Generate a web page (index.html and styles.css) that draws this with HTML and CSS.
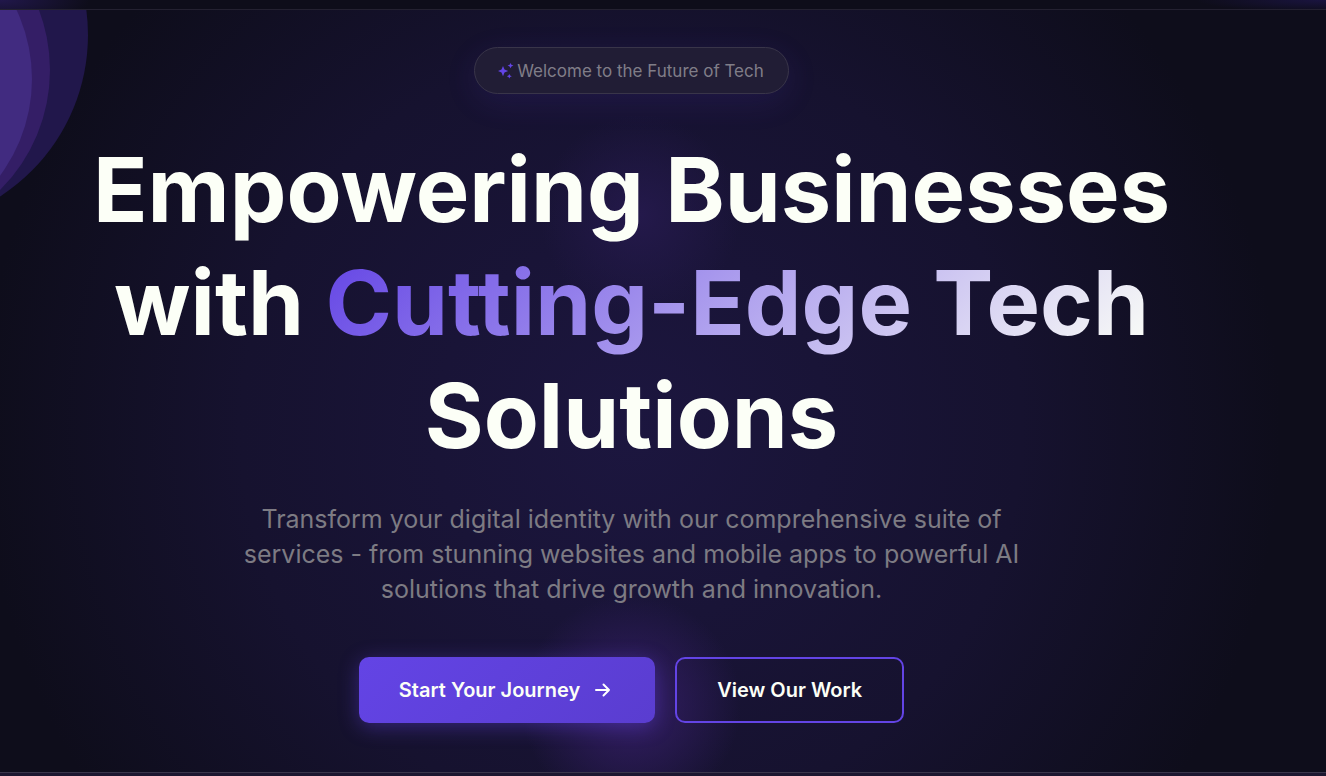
FILE: index.html
```html
<!DOCTYPE html>
<html lang="en">
<head>
    <meta charset="UTF-8">
    <meta name="viewport" content="width=device-width, initial-scale=1.0">
    <title>Cutting-Edge Tech Solutions</title>
    <link rel="stylesheet" href="styles.css">
</head>
<body>
    <header class="top-bar"></header>

    <main class="hero">
        <!-- Overlapping circles in the corner -->
        <svg class="hero-circles" width="100" height="200" viewBox="0 10 100 200" aria-hidden="true">
            <circle cx="-104" cy="35" r="192" fill="#21174b"/>
            <circle cx="-119" cy="70" r="169" fill="#341e66"/>
            <circle cx="-130" cy="79" r="162" fill="#412b80"/>
        </svg>

        <div class="hero-content">
            <div class="hero-badge">
                <svg width="16" height="16" viewBox="0 0 16 16" fill="#6344e5" aria-hidden="true">
                    <path d="M5 3 6.5 6.5 10.2 8 6.5 9.5 5 13.2 3.5 9.5 0 8 3.5 6.5Z"/>
                    <path d="M12.5 0 13.4 1.8 15.4 2.6 13.4 3.4 12.5 5.2 11.6 3.4 9.6 2.6 11.6 1.8Z"/>
                    <path d="M11.3 11 12.1 12.6 13.8 13.3 12.1 14 11.3 15.6 10.5 14 8.8 13.3 10.5 12.6Z"/>
                </svg>
                <span>Welcome to the Future of Tech</span>
            </div>

            <h1>Empowering Businesses with <span class="gradient-text">Cutting-Edge Tech</span> Solutions</h1>

            <p>Transform your digital identity with our comprehensive suite of services - from stunning websites and mobile apps to powerful AI solutions that drive growth and innovation.</p>

            <div class="hero-buttons">
                <button type="button" class="btn btn-primary">
                    Start Your Journey
                    <svg width="16" height="16" viewBox="0 0 16 16" fill="none" stroke="#fff" stroke-width="2" stroke-linecap="round" stroke-linejoin="round" aria-hidden="true">
                        <path d="M1 8H14M8.5 2.5 14 8 8.5 13.5"/>
                    </svg>
                </button>
                <button type="button" class="btn btn-outline">View Our Work</button>
            </div>
        </div>
    </main>

    <footer class="bottom-bar"></footer>
</body>
</html>
```

FILE: styles.css
```css
* {
    box-sizing: border-box;
}
body {
    margin: 0;
    min-height: 100vh;
    display: flex;
    flex-direction: column;
    background-color: #0e0d1a;
    color: #fcfff7;
    font-family: Inter, sans-serif;
}
.top-bar {
    height: 10px;
    border-bottom: 1px solid #242131;
    background:
        radial-gradient(ellipse 90px 24px at 0 0, #21174b, transparent),
        radial-gradient(ellipse 130px 12px at 100% 0, #1a1440, transparent),
        #0e0d1a;
}
.hero {
    position: relative;
    flex: 1;
    padding: 37px 63px 48px 0;
    background:
        radial-gradient(circle 110px at 631px 695px, #341e66, transparent),
        radial-gradient(circle 100px at 640px 205px, #24194b, transparent),
        radial-gradient(circle 650px at 631px 420px, #1c163f, #16122f 60%, #0e0d1b);
}
.hero-circles {
    position: absolute;
    top: 0;
    left: 0;
}
.hero-content {
    display: flex;
    flex-direction: column;
    align-items: center;
    text-align: center;
}
.hero-badge {
    display: flex;
    align-items: center;
    gap: 3px;
    height: 47px;
    padding: 0 24px 0 23px;
    border: 1px solid #393549;
    border-radius: 24px;
    background-color: #211d35;
    box-shadow: 0 8px 32px rgba(99, 68, 229, 0.12);
    color: #807d88;
    font-size: 17px;
}
h1 {
    max-width: 1120px;
    margin: 39px 0 30px;
    font-size: 90px;
    font-weight: 700;
    line-height: 113px;
}
.gradient-text {
    background: linear-gradient(135deg, #6344e5, #fcfff7);
    -webkit-background-clip: text;
    background-clip: text;
    color: transparent;
}
p {
    max-width: 800px;
    margin: 0 0 50px;
    color: #7d7b83;
    font-size: 25px;
    line-height: 35px;
}
.hero-buttons {
    display: flex;
    gap: 20px;
}
.btn {
    display: flex;
    align-items: center;
    gap: 15px;
    height: 66px;
    padding: 0 40px;
    border: 0;
    border-radius: 10px;
    color: #fcfff7;
    font-family: inherit;
    font-size: 20px;
    font-weight: 600;
    cursor: pointer;
}
.btn-primary {
    padding-right: 44px;
    background: linear-gradient(135deg, #6344e5, #5a3dd0);
    box-shadow: 0 4px 20px rgba(99, 68, 229, 0.4);
}
.btn-outline {
    border: 2px solid #6344e5;
    background-color: transparent;
}
.bottom-bar {
    height: 4px;
    border-top: 1px solid #3a364b;
    background-color: #1c1730;
}
```
